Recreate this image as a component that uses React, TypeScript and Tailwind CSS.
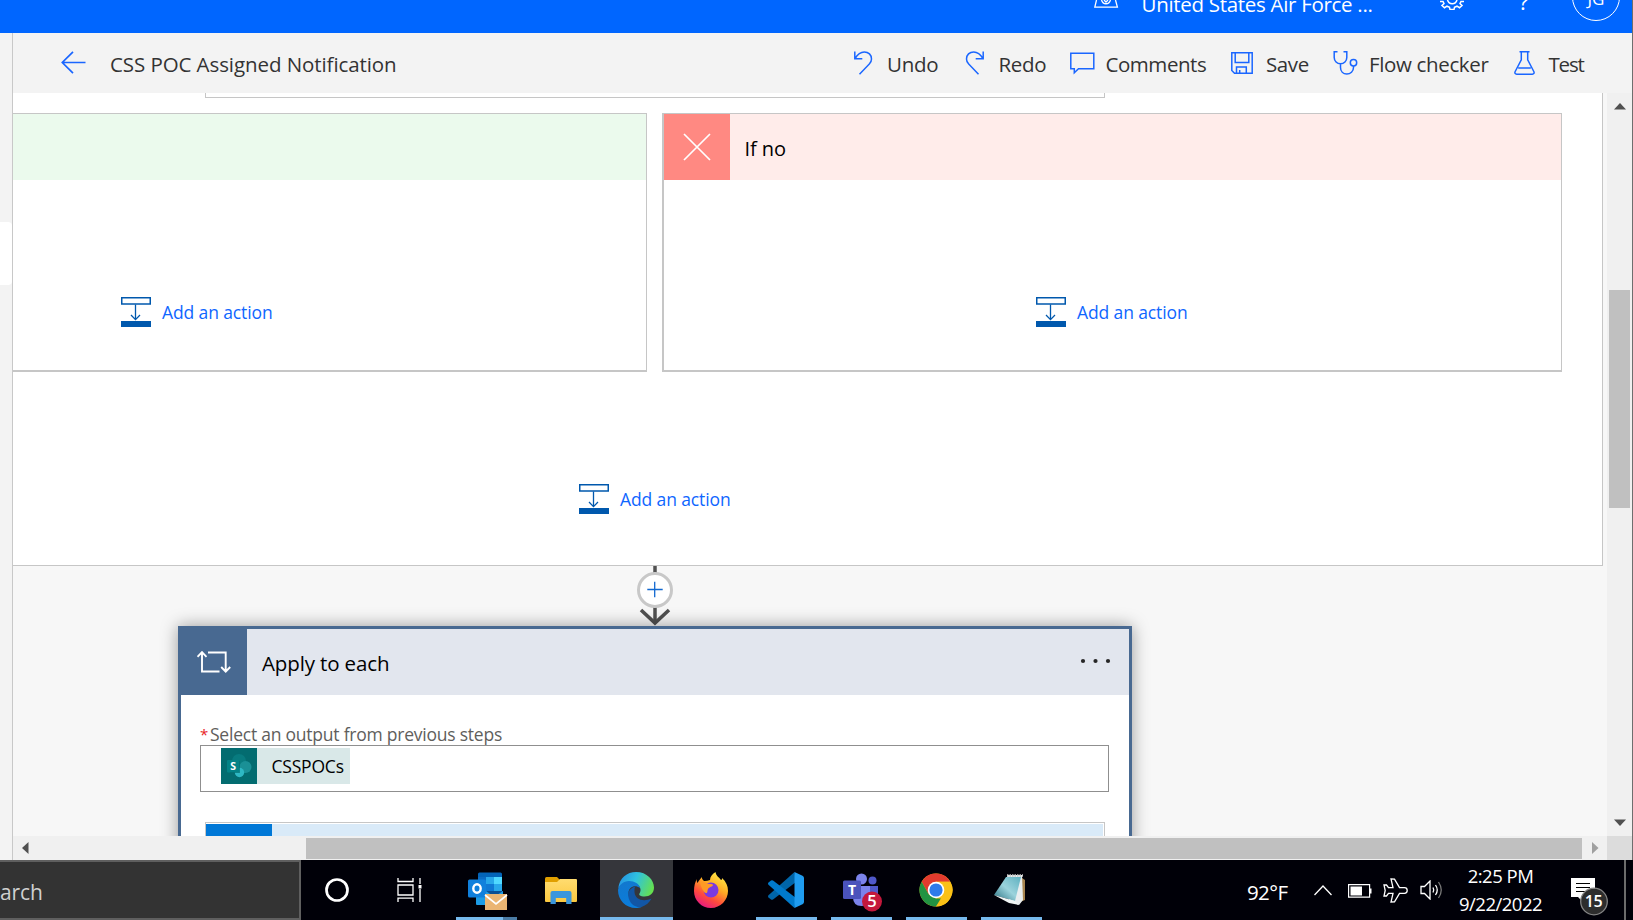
import type { ReactNode } from "react";

const stroke = "#1a66ff";

function AddActionIcon() {
  return (
    <svg width="30" height="30" viewBox="0 0 30 30" fill="none">
      <path d="M.75.75h28.5v6.3H.75z" stroke="#0058ad" strokeWidth="1.5" />
      <path d="M14.5 7.5v14.8M10 18l4.5 4.6L19 18" stroke="#0058ad" strokeWidth="1.3" />
      <path d="M0 24h30v6H0z" fill="#0058ad" />
    </svg>
  );
}

function AddAction() {
  return (
    <div className="flex h-[30px] items-center gap-[11px]">
      <AddActionIcon />
      <span className="text-[17.5px] leading-[30px] tracking-[-0.12px] text-[#0f66ff]">Add an action</span>
    </div>
  );
}

function Command({ className, label, children }: { className: string; label: string; children: ReactNode }) {
  return (
    <div className={`flex h-full shrink-0 items-center ${className}`}>
      {children}
      <span className="mt-[3px] whitespace-nowrap">{label}</span>
    </div>
  );
}

function TopBar() {
  return (
    <header className="flex h-[33px] shrink-0 items-start overflow-hidden bg-[#0066ff] text-white">
      <svg className="ml-[1094px] shrink-0" width="25" height="9" fill="none" stroke="#fff" strokeWidth="1.3">
        <path d="M2.5 0 .8 7.100h22.600L21.500 0M7.500 0c1.500 5 7.500 5 9 0M10 0l2 2 2-2" />
      </svg>
      <span className="-mt-[10px] ml-[22.5px] w-[298.5px] shrink-0 text-[20.5px] leading-[28px] tracking-[-0.3px] whitespace-nowrap">
        United States Air Force ...
      </span>
      <svg className="shrink-0" width="25" height="10" fill="none" stroke="#fff" strokeWidth="1.5">
        <path d="M0 1.500h3l1 2-2 2 2.500 2.200 2.500-1.500 2.500 1 .5 2.300h4l.5-2.300 2.500-1 2.500 1.500L22 5.500l-2-2 1-2h3" />
        <path d="M7.500 0c1.500 5 8 5 9.500 0" />
      </svg>
      <span className="-mt-[14px] ml-[54px] w-[41px] shrink-0 text-[22px] leading-[30px]">?</span>
      <div className="-mt-[27px] ml-[12px] flex size-[48px] shrink-0 items-center justify-center rounded-full border border-white text-[17px]">
        <span className="mt-[3px]">JG</span>
      </div>
    </header>
  );
}

function Toolbar() {
  return (
    <div className="flex h-[60px] shrink-0 items-center bg-[#f3f3f3] text-[20.5px] text-[#333]">
      <svg className="ml-[48px] shrink-0" width="25" height="24" fill="none" stroke={stroke} strokeWidth="1.700">
        <path d="M24.500 11.500H1.500M12 .8 1.300 11.500 12 22.200" />
      </svg>
      <span className="mt-[3px] ml-[24px] w-[743px] shrink-0 tracking-[-0.08px] whitespace-nowrap">
        CSS POC Assigned Notification
      </span>
      <Command label="Undo" className="w-[112px] gap-[14px] tracking-[-0.3px]">
        <svg className="shrink-0" width="20" height="24" fill="none" stroke={stroke} strokeWidth="1.500">
          <path d="M1.800.5v7.300h7.500M2 7.500C5 2.500 8.200.9 11.300.9c4.200 0 7.200 3 7.200 7 0 2-.8 3.700-2.200 5.100L6.500 23.200" />
        </svg>
      </Command>
      <Command label="Redo" className="w-[104px] gap-[13.5px] tracking-[-0.35px]">
        <svg className="shrink-0" width="20" height="24" fill="none" stroke={stroke} strokeWidth="1.500">
          <path d="M18.200.5v7.300h-7.500M18 7.500C15 2.500 11.800.9 8.700.9c-4.200 0-7.200 3-7.200 7 0 2 .8 3.700 2.200 5.100l9.800 10.200" />
        </svg>
      </Command>
      <Command label="Comments" className="w-[162px] gap-[10.5px] tracking-[-0.45px]">
        <svg className="shrink-0" width="26" height="24" fill="none" stroke={stroke} strokeWidth="1.500">
          <path d="M1.800 2.200h23v15.600H9.500l-4.200 4v-4H1.800z" />
        </svg>
      </Command>
      <Command label="Save" className="w-[102px] gap-[13px] tracking-[-0.4px]">
        <svg className="shrink-0" width="22" height="22" fill="none" stroke={stroke} strokeWidth="1.500">
          <path d="M.8.8h20.400v20.400H3.500L.8 18.500zM4.200 1v9.500h13.600V1M5.500 21v-6h9.800v6M8.700 21v-3" />
        </svg>
      </Command>
      <Command label="Flow checker" className="w-[181px] gap-[11px] tracking-[-0.35px]">
        <svg className="shrink-0" width="25" height="24" fill="none" stroke={stroke} strokeWidth="1.500">
          <path d="M4.500.8H1.200v5.700a6.300 6.300 0 0 0 12.600 0V.8h-3.300M7.500 12.800v3.700c0 4 2.700 6.500 6.300 6.500s6.700-2.700 6.700-6.500V15" />
          <circle cx="20.500" cy="11.700" r="3.200" />
        </svg>
      </Command>
      <Command label="Test" className="gap-[13.5px] tracking-[-1.2px]">
        <svg className="shrink-0" width="21" height="24" fill="none" stroke={stroke} strokeWidth="1.500">
          <path d="M5.500.8h10M7.300 1v7.800L1.200 20.500c-.8 1.500 0 2.700 1.500 2.700h15.600c1.500 0 2.300-1.200 1.500-2.700L13.700 8.800V1M4.200 17h12.600" />
        </svg>
      </Command>
    </div>
  );
}

function ConditionScope() {
  return (
    <section className="h-[473px] w-[1590px] shrink-0 border-r border-b border-[#c6c6c6] bg-white">
      <div className="ml-[192px] h-[5px] w-[900px] border-x border-b border-[#c6c6c6]" />
      <div className="mt-[15px] flex gap-[15px]">
        <div className="h-[259px] w-[634px] border-t border-r border-b-2 border-[#c6c6c6]">
          <div className="h-[66px] bg-[#ebfaed]" />
          <div className="mt-[117px] ml-[108px]">
            <AddAction />
          </div>
        </div>
        <div className="h-[259px] w-[900px] border-t border-r border-b-2 border-l-2 border-[#c6c6c6]">
          <div className="flex h-[66px] items-center bg-[#ffecea]">
            <div className="flex size-[66px] items-center justify-center bg-[#ff8982]">
              <svg width="28" height="28" fill="none" stroke="#fff" strokeWidth="1.700">
                <path d="m1 1 26 26M27 1 1 27" />
              </svg>
            </div>
            <span className="mt-[3px] ml-[14.5px] text-[20px] tracking-[-0.05px] text-black">If no</span>
          </div>
          <div className="mt-[117px] ml-[372px]">
            <AddAction />
          </div>
        </div>
      </div>
      <div className="mt-[112px] ml-[566px]">
        <AddAction />
      </div>
    </section>
  );
}

function Connector() {
  return (
    <svg className="ml-[622px] block shrink-0" width="40" height="60" viewBox="0 0 40 60" fill="none">
      <path d="M20 0v57" stroke="#505050" strokeWidth="3.500" />
      <path d="m6 44 14 13 14-13" stroke="#505050" strokeWidth="3.600" />
      <circle cx="20" cy="24" r="16.500" fill="#fff" stroke="#c8c8c8" strokeWidth="3" />
      <path d="M12.300 23.500h15.400M19.700 15.800v15.400" stroke="#1168d0" strokeWidth="1.300" />
    </svg>
  );
}

function SharePointIcon() {
  return (
    <svg width="36" height="36" viewBox="0 0 36 36" className="shrink-0 bg-[#036c70]">
      <circle cx="18" cy="13" r="7" fill="#087b7f" />
      <circle cx="24.500" cy="19" r="6" fill="#1a9096" />
      <circle cx="18.500" cy="24.500" r="4.700" fill="#2eb8c4" />
      <path d="M9 13h10v12H9z" fill="#025356" opacity=".5" />
      <rect x="6" y="12" width="12.500" height="12.500" rx="1" fill="#038387" />
      <text x="12.200" y="22" textAnchor="middle" fontSize="10.500" fontWeight="700" fill="#fff">S</text>
    </svg>
  );
}

function ApplyToEach() {
  return (
    <section className="ml-[165px] h-[260px] w-[954px] shrink-0 border-[3px] border-[#486991] bg-white shadow-[0_0_16px_rgba(0,0,0,0.38)]">
      <div className="flex h-[66px] items-center bg-[#e2e6ee]">
        <div className="flex size-[66px] items-center justify-center bg-[#486991]">
          <svg width="34" height="24" fill="none" stroke="#fff" strokeWidth="1.900">
            <path d="M5 2.500v19h17.500M.5 6.800 5 2.200l4.500 4.600M11 2.500h17.700v19M24.200 17l4.500 4.600 4.500-4.600" />
          </svg>
        </div>
        <span className="mt-[3px] ml-[15px] text-[20.5px] tracking-[-0.13px] text-black">Apply to each</span>
        <svg className="mr-[17px] mb-[2px] ml-auto" width="32" height="6" fill="#262626">
          <circle cx="3" cy="3" r="2.100" />
          <circle cx="15.500" cy="3" r="2.100" />
          <circle cx="28" cy="3" r="2.100" />
        </svg>
      </div>
      <div className="mt-[26px] ml-[19px] flex h-[24px] items-center gap-[2px] pt-[2px] text-[17.5px] whitespace-nowrap text-[#605e5c]">
        <span className="w-[8px] text-[15px] text-[#e8221f]">*</span>
        <span className="tracking-[-0.23px]">Select an output from previous steps</span>
      </div>
      <div className="ml-[19px] flex h-[47px] w-[909px] border border-[#8f8f8f] pt-[2px] pl-[20px]">
        <div className="flex h-[36px] w-[129px] items-center bg-[#d9e8e8]">
          <SharePointIcon />
          <span className="ml-[14.5px] text-[17.5px] tracking-[-0.2px] text-black">CSSPOCs</span>
        </div>
      </div>
      <div className="mt-[30px] ml-[24px] h-[40px] w-[900px] border border-[#c6c6c6] pt-px">
        <div className="mr-px h-[38px] bg-[#d9eaf8]">
          <div className="h-full w-[66px] bg-[#0078d7]" />
        </div>
      </div>
    </section>
  );
}

function VerticalScrollbar() {
  return (
    <div className="flex w-[25px] shrink-0 flex-col items-center bg-[#f0f0f0] pt-[10px] pb-[10px]">
      <svg width="12" height="7" fill="#505050">
        <path d="M6 0 12 6.500H0z" />
      </svg>
      <div className="mt-[180px] h-[218px] w-[21px] bg-[#c0c0c0]" />
      <svg className="mt-auto" width="12" height="7" fill="#505050">
        <path d="M0 .5h12L6 7z" />
      </svg>
    </div>
  );
}

function HorizontalScrollbar() {
  return (
    <div className="flex h-[24px] shrink-0 items-center bg-[#f0f0f0]">
      <svg className="ml-[9px] shrink-0" width="7" height="12" fill="#505050">
        <path d="M6.500 0v12L0 6z" />
      </svg>
      <div className="ml-[277px] h-[21px] w-[1276px] shrink-0 bg-[#c0c0c0]" />
      <svg className="ml-[10px] shrink-0" width="7" height="12" fill="#a0a0a0">
        <path d="M0 0v12l6.500-6z" />
      </svg>
      <div className="ml-auto h-full w-[25px] shrink-0 bg-[#dcdcdc]" />
    </div>
  );
}

function OutlookIcon() {
  return (
    <svg width="40" height="40" viewBox="0 0 40 40">
      <path d="M10 2q0-1.500 1.500-1.500h21Q34 .5 34 2v16H10z" fill="#0364b8" />
      <path d="M10 5h8v14h-8z" fill="#0a6cc4" />
      <path d="M18 5h8v7h-8z" fill="#28a8ea" />
      <path d="M26 5h8v7h-8z" fill="#50d9ff" />
      <path d="M18 12h8v7h-8z" fill="#0f78d4" />
      <path d="M26 12h8v7h-8z" fill="#28a8ea" />
      <path d="M8 19h27v13q0 1-1 1H9q-1 0-1-1z" fill="#1c9ce6" />
      <path d="M18 19h17l-9 6z" fill="#0a4f94" />
      <rect y="7.500" width="18" height="18" rx="1.500" fill="#1080dc" />
      <ellipse cx="9" cy="16.500" rx="3.700" ry="4.200" fill="none" stroke="#fff" strokeWidth="2.400" />
      <path d="M17 22h22v16H17z" fill="#ebb573" />
      <path d="m17 23 11 9 11-9" fill="none" stroke="#fff" strokeWidth="1.700" />
    </svg>
  );
}

function ExplorerIcon() {
  return (
    <svg width="32" height="28" viewBox="0 0 32 28">
      <defs>
        <linearGradient id="folder" x1="0" y1="0" x2="0" y2="1">
          <stop offset="0" stopColor="#ffdc70" />
          <stop offset="1" stopColor="#fbc840" />
        </linearGradient>
      </defs>
      <path d="M0 1.500Q0 0 1.500 0H12l3 3v5H0z" fill="#e09f00" />
      <path d="M0 5h12l3-3h16q1 0 1 1v21q0 1-1 1H1q-1 0-1-1z" fill="url(#folder)" />
      <path d="M5.500 27V16q0-2 2-2h17q2 0 2 2v11h-5.300v-6H10.800v6z" fill="#3a96dd" />
    </svg>
  );
}

function EdgeIcon() {
  return (
    <svg width="36" height="36" viewBox="0 0 36 36">
      <defs>
        <linearGradient id="edgeTop" x1="0" y1=".3" x2="1" y2=".6">
          <stop offset="0" stopColor="#2493e4" />
          <stop offset=".45" stopColor="#2fc2df" />
          <stop offset="1" stopColor="#66e14e" />
        </linearGradient>
        <linearGradient id="edgeLeft" x1="0" y1="0" x2=".4" y2="1">
          <stop offset="0" stopColor="#1377cc" />
          <stop offset="1" stopColor="#0a7ddc" />
        </linearGradient>
      </defs>
      <path d="M.3 16C1.500 6 9 0 18 0c11 0 18 8 18 15.500 0 6-4.500 9-9.500 9-4 0-6-1.400-5-3 2.500-4 .5-8-4-9.500C11.500 10 4 11 .3 16z" fill="url(#edgeTop)" />
      <path d="M0 18C.5 13 5.500 9 11 9c5.500 0 10.500 3 11 7-5-4-11.500-1-11.500 5 0 7 6 13 13 14-2 .8-4 1-5.500 1C7.500 36 0 28 0 18z" fill="url(#edgeLeft)" />
      <path d="M17 14.800C12 16 9.500 20 10.300 24.500 11.500 31.500 17 36 23.500 35c4.500-1.500 8-4.500 10-8.500-7.500 3.500-16.500 1.500-17-6.500 0-2.500 0-4 .5-5.200z" fill="#1256a5" />
    </svg>
  );
}

function FirefoxIcon() {
  return (
    <svg width="34" height="36" viewBox="0 0 34 36">
      <defs>
        <linearGradient id="foxBody" x1=".8" y1="0" x2=".25" y2="1">
          <stop offset="0" stopColor="#fff14a" />
          <stop offset=".4" stopColor="#ffaa24" />
          <stop offset=".7" stopColor="#ff4b3c" />
          <stop offset="1" stopColor="#e31587" />
        </linearGradient>
      </defs>
      <path d="M3 7c-.5 2 0 3 .5 4 1.500-3 3.500-4.500 4-6 .5 2 1.500 3 2.500 4 2 .2 4-.5 6-1 0-3 2-6 5.500-8 .5 4 3.500 5 5.500 8 1 0 1-1 1-2 4 3.500 6 8 6 13 0 9-7.500 17-17 17S0 28.500 0 19c0-5 1-9 3-12z" fill="url(#foxBody)" />
      <circle cx="17" cy="18" r="7.500" fill="#7a3ae0" />
      <path d="M6 10c5-.5 7 2 10 2 1.500 0 3 .3 3 1 0 1.500-4 2-5 4-1 2 0 4-2 4s-5-5-6-11z" fill="#ff9a25" />
    </svg>
  );
}

function CodeIcon() {
  return (
    <svg width="36" height="36" viewBox="0 0 36 36">
      <path d="m26.500 0 1.500 10L5 27.500q-1 .7-2 0l-2.500-2q-1-1.200 0-2.200z" fill="#0065a9" />
      <path d="M26.500 36 28 26 5 8.500q-1-.7-2 0l-2.500 2q-1 1.200 0 2.200z" fill="#007acc" />
      <path d="m26.500 0 8 3.800Q36 4.500 36 6v24q0 1.500-1.500 2.200l-8 3.800z" fill="#1f9cf0" />
    </svg>
  );
}

function TeamsIcon() {
  return (
    <svg width="40" height="39" viewBox="0 0 40 39">
      <circle cx="18.500" cy="6" r="5.500" fill="#7b83eb" />
      <circle cx="29.500" cy="7.500" r="4" fill="#5059c9" />
      <path d="M26 13h9v12q0 5-5 5h-4z" fill="#5059c9" />
      <path d="M10 13h17v11q0 9-8.500 9T10 24z" fill="#7b83eb" />
      <rect y="7.500" width="18" height="18.500" rx="1.500" fill="#4b53bc" />
      <text x="9" y="21.500" textAnchor="middle" fontSize="14" fontWeight="700" fill="#fff">T</text>
      <circle cx="29" cy="28.500" r="10" fill="#c4183c" />
      <text x="29" y="34.200" textAnchor="middle" fontSize="16.500" fontWeight="600" fill="#fff">5</text>
    </svg>
  );
}

function ChromeIcon() {
  return (
    <svg width="34" height="34" viewBox="0 0 34 34">
      <circle cx="17" cy="17" r="16.500" fill="#fbc116" />
      <path d="M2.700 8.700a16.500 16.500 0 0 1 28.600 0H17L9.600 21.200z" fill="#e33b2e" />
      <path d="M2.700 8.700 9.600 21.200 17 25.500h6.800L17 33.500A16.500 16.500 0 0 1 2.700 8.700z" fill="#229342" />
      <path d="M24.400 21.200 17 33.500A16.500 16.500 0 0 0 31.300 8.700H17z" fill="#fbc116" />
      <circle cx="17" cy="17" r="8.300" fill="#fff" />
      <circle cx="17" cy="17" r="6.600" fill="#2f7bea" />
    </svg>
  );
}

function NotepadIcon() {
  return (
    <svg width="33" height="33" viewBox="0 0 33 33">
      <defs>
        <linearGradient id="page" x1="0" y1="1" x2="1" y2="0">
          <stop offset="0" stopColor="#276f80" />
          <stop offset=".5" stopColor="#9bd3dc" />
          <stop offset="1" stopColor="#5eb0c0" />
        </linearGradient>
      </defs>
      <path d="m28 4 3 2v20l-5 2z" fill="#a88550" />
      <path d="M13 1h15l1 25-4 5-10-4z" fill="#e8edef" />
      <path d="M12 3h15l-6 24L0 21z" fill="url(#page)" />
      <path d="M13 1.500h16" stroke="#c6c6c6" strokeWidth="2.500" strokeDasharray="1.500 1" />
      <path d="m0 21 21 6 4 4-10-2z" fill="#f0f5f5" />
    </svg>
  );
}

function TaskApp({ className, bar, children }: { className: string; bar: string; children: ReactNode }) {
  return (
    <div className={`flex h-full shrink-0 flex-col items-center ${className}`}>
      <div className="flex h-[57px] items-center">{children}</div>
      <div className={`h-[3px] ${bar}`} />
    </div>
  );
}

function Taskbar() {
  return (
    <footer className="flex h-[60px] shrink-0 bg-[#000008] text-white">
      <div className="flex h-full w-[301px] shrink-0 items-center border-y-2 border-r-2 border-[#5f5f5f] bg-[#333]">
        <span className="mt-[5px] text-[21px] tracking-[-0.1px] text-[#d0d0d0]">arch</span>
      </div>
      <div className="flex w-[72px] shrink-0 items-center justify-center">
        <svg width="26" height="26" fill="none" stroke="#fff" strokeWidth="2.700">
          <circle cx="13" cy="13" r="10.500" />
        </svg>
      </div>
      <div className="flex w-[72px] shrink-0 items-center justify-center">
        <svg width="25" height="24" fill="none" stroke="#fff" strokeWidth="1.300">
          <path d="M1 0v3.500h15V0M1 7h15v10H1zM1 24v-3.800h15V24M23 0v6M23 11v13" />
          <path d="M21.500 7h3v3.500h-3z" fill="#fff" stroke="none" />
        </svg>
      </div>
      <div className="flex h-full w-[82px] shrink-0 flex-col pl-[11px]">
        <div className="flex h-[57px] items-center pt-[7px] pl-[12px]">
          <OutlookIcon />
        </div>
        <div className="flex">
          <div className="h-[3px] w-[47px] bg-[#76b9ed]" />
          <div className="h-[3px] w-[14px] bg-[#4a7ba5]" />
        </div>
      </div>
      <TaskApp className="w-[68px]" bar="w-0"><div className="mt-[5px]"><ExplorerIcon /></div></TaskApp>
      <TaskApp className="ml-[5px] w-[73px] bg-[#35363b]" bar="w-[73px] bg-[#76b9ed]"><div className="mt-[3px] mr-px"><EdgeIcon /></div></TaskApp>
      <TaskApp className="w-[76px]" bar="w-0"><div className="mt-[2px]"><FirefoxIcon /></div></TaskApp>
      <TaskApp className="w-[75px]" bar="w-[61px] bg-[#76b9ed]"><div className="mt-[3px] mr-px"><CodeIcon /></div></TaskApp>
      <TaskApp className="w-[75px]" bar="w-[61px] bg-[#76b9ed]"><div className="mt-[8px] ml-[2px]"><TeamsIcon /></div></TaskApp>
      <TaskApp className="w-[75px]" bar="w-[61px] bg-[#76b9ed]"><div className="mt-[2px] mr-[2px]"><ChromeIcon /></div></TaskApp>
      <TaskApp className="w-[75px]" bar="w-[61px] bg-[#76b9ed]"><div className="mt-[3px] mr-[3px]"><NotepadIcon /></div></TaskApp>
      <div className="ml-[198px] flex w-[67px] shrink-0 items-center">
        <span className="mt-[4px] text-[20.5px] tracking-[-0.6px]">92°F</span>
      </div>
      <div className="flex w-[144px] shrink-0 items-center">
        <svg className="shrink-0" width="18" height="11" fill="none" stroke="#fff" strokeWidth="1.300">
          <path d="m.5 10 8.500-9 8.500 9" />
        </svg>
        <svg className="mt-[1px] ml-[16px] shrink-0" width="24" height="14" fill="none" stroke="#fff" strokeWidth="1.200">
          <path d="M.6.600h21v12.500H.6z" />
          <path d="M2.500 2.500H14v9H2.500zM22 4.500h1.500v5H22z" fill="#fff" stroke="none" />
        </svg>
        <svg className="ml-[11px] shrink-0" width="25" height="25" fill="none" stroke="#fff" strokeWidth="1.300">
          <path d="m8 1 3.500.2 5 8.500h5c1.500 0 2.700 1.300 2.700 2.800s-1.200 2.800-2.700 2.800h-5l-5 8.500L8 24l2-8.700H5.500L3.500 18H1l1.200-5.500L1 7h2.500l2 2.700H10z" />
        </svg>
        <svg className="ml-[12px] shrink-0" width="23" height="20" fill="none" stroke="#fff" strokeWidth="1.300">
          <path d="M1 6.500h3.500L10 1v18l-5.500-5.500H1z" />
          <path d="M13 7.500q1.500 2.500 0 5M15.500 5q3.500 5 0 10" />
          <path d="M18.500 2q5.500 8 0 16" stroke="#777" />
        </svg>
      </div>
      <div className="flex w-[85px] shrink-0 flex-col items-center pt-[2px] text-[18.5px] leading-[28px] tracking-[-0.500px] whitespace-nowrap">
        <span>2:25 PM</span>
        <span>9/22/2022</span>
      </div>
      <svg className="ml-[28px] shrink-0" width="38" height="60" viewBox="0 0 38 60">
        <path d="M0 18h24v19H12v5l-5-5H0z" fill="#fff" />
        <path d="M5 23.500h14M5 27.500h14M5 31.500h14" stroke="#000" strokeWidth="1.200" />
        <circle cx="23" cy="41.500" r="13.300" fill="#2d2d2d" stroke="#858585" strokeWidth="1.300" />
        <text x="22.500" y="47.300" textAnchor="middle" fontSize="16" fontWeight="600" letterSpacing="-.5" fill="#fff">15</text>
      </svg>
      <div className="ml-[15px] h-full w-[2px] shrink-0 bg-[#6b6b6b]" />
    </footer>
  );
}

export default function App() {
  return (
    <div className="flex h-[920px] w-[1633px] flex-col overflow-hidden font-['Open_Sans','Noto_Sans',sans-serif]">
      <div className="flex h-[860px] w-full shrink-0 flex-col border-r border-[#6e6e6e]">
        <TopBar />
        <div className="flex h-[827px] w-full">
          <aside className="w-[13px] shrink-0 border-r border-[#c8c8c8] bg-[#f3f3f3] pt-[189px]">
            <div className="h-[63px] rounded-r bg-white" />
          </aside>
          <main className="flex w-[1619px] shrink-0 flex-col">
            <Toolbar />
            <div className="flex h-[743px] shrink-0">
              <div className="flex w-[1594px] shrink-0 flex-col overflow-hidden bg-[#f7f7f7]">
                <ConditionScope />
                <Connector />
                <ApplyToEach />
              </div>
              <VerticalScrollbar />
            </div>
            <HorizontalScrollbar />
          </main>
        </div>
      </div>
      <Taskbar />
    </div>
  );
}
